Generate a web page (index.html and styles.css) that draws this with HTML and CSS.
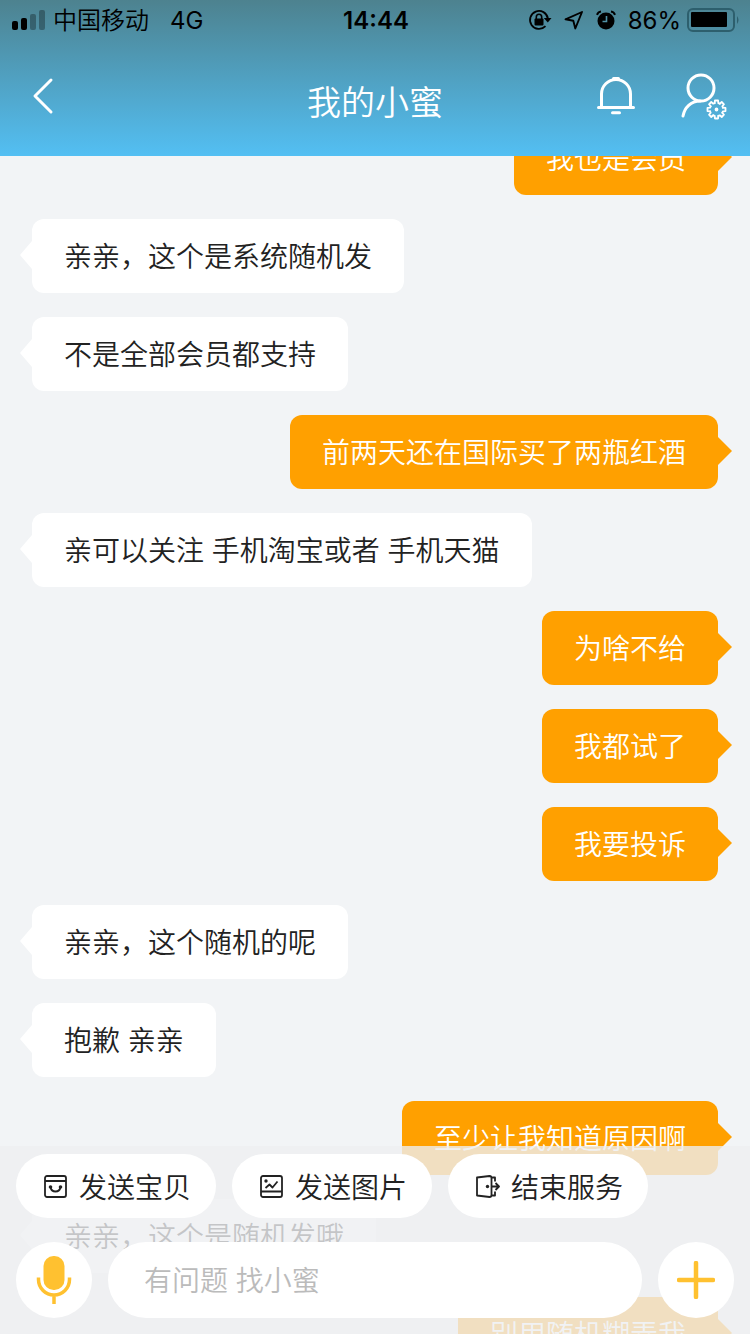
FILE: index.html
```html
<!DOCTYPE html>
<html lang="zh-CN">
<head>
    <meta charset="UTF-8">
    <meta name="viewport" content="width=device-width, initial-scale=1.0">
    <title>我的小蜜</title>
    <link rel="stylesheet" href="styles.css">
</head>
<body>
    <div class="app">
        <header class="header">
            <div class="status-bar">
                <div class="status-left">
                    <svg class="signal" width="33" height="20" viewBox="0 0 33 20">
                        <rect x="0" y="11" width="6" height="9" rx="2"/>
                        <rect x="9" y="8" width="6" height="12" rx="2"/>
                        <rect x="18" y="4" width="6" height="16" rx="2" opacity=".3"/>
                        <rect x="27" y="0" width="6" height="20" rx="2" opacity=".3"/>
                    </svg>
                    <span class="carrier">中国移动</span>
                    <span class="network">4G</span>
                </div>
                <span class="time">14:44</span>
                <div class="status-right">
                    <!-- rotation lock, location, alarm -->
                    <svg width="24" height="22" viewBox="0 0 24 22">
                        <path d="M17.5 17.2A9 9 0 1 1 19.9 9.5" fill="none" stroke="#000" stroke-width="1.8"/>
                        <path d="M15.8 9H23.5L19.8 13.5z"/>
                        <rect x="6.5" y="9.5" width="9" height="7" rx="1"/>
                        <path d="M8.3 10V8a2.7 2.7 0 0 1 5.4 0v2" fill="none" stroke="#000" stroke-width="1.6"/>
                    </svg>
                    <svg width="20" height="20" viewBox="0 0 20 20">
                        <path d="M18 2L1.5 9.3L9.3 10.7L11.3 18.5z" fill="none" stroke="#000" stroke-width="1.9" stroke-linejoin="round"/>
                    </svg>
                    <svg width="20" height="20" viewBox="0 0 20 20">
                        <circle cx="10" cy="11" r="8.5"/>
                        <path d="M1 4.8Q2 2 5 1.5M19 4.8Q18 2 15 1.5" fill="none" stroke="#000" stroke-width="2"/>
                        <path d="M10.5 6v5.5H6.5" fill="none" stroke="#5092a6" stroke-width="1.6"/>
                    </svg>
                    <span class="percent">86%</span>
                    <svg class="battery" width="53" height="24" viewBox="0 0 53 24">
                        <rect x="1" y="1" width="46" height="22" rx="5" fill="none" stroke="#2d5f6d" stroke-width="2"/>
                        <rect x="4" y="4" width="36" height="15" rx="1"/>
                        <path d="M50 8q3 4 0 8z" fill="#2d5f6d"/>
                    </svg>
                </div>
            </div>
            <nav class="nav">
                <button class="icon-button back" aria-label="返回">
                    <svg width="22" height="38" viewBox="0 0 22 38">
                        <path d="M19 3L3 19L19 35"/>
                    </svg>
                </button>
                <h1 class="title">我的小蜜</h1>
                <div class="nav-actions">
                    <button class="icon-button" aria-label="通知">
                        <svg width="38" height="40" viewBox="0 0 38 40">
                            <path d="M4.5 31.5V18a14.5 14.5 0 0 1 29 0v13.5M1.5 31.5h35M15.5 36.7h7M16.5 2.5h5"/>
                        </svg>
                    </button>
                    <button class="icon-button" aria-label="个人设置">
                        <svg width="46" height="48" viewBox="0 0 46 48">
                            <circle cx="20" cy="16" r="13"/>
                            <path d="M2 44C3.5 35.5 10 29 19 29"/>
                            <g class="gear" transform="translate(35.5 37.5)">
                                <path id="tooth" d="M6.4-1.8L9-1.6V1.6L6.4 1.8L5.8 3.25"/>
                                <use href="#tooth" transform="rotate(45)"/>
                                <use href="#tooth" transform="rotate(90)"/>
                                <use href="#tooth" transform="rotate(135)"/>
                                <use href="#tooth" transform="rotate(180)"/>
                                <use href="#tooth" transform="rotate(225)"/>
                                <use href="#tooth" transform="rotate(270)"/>
                                <use href="#tooth" transform="rotate(315)"/>
                                <circle r="1"/>
                            </g>
                        </svg>
                    </button>
                </div>
            </nav>
        </header>

        <main class="chat">
            <div class="messages">
                <p class="bubble sent">我也是会员</p>
                <p class="bubble received">亲亲，这个是系统随机发</p>
                <p class="bubble received">不是全部会员都支持</p>
                <p class="bubble sent">前两天还在国际买了两瓶红酒</p>
                <p class="bubble received">亲可以关注 手机淘宝或者 手机天猫</p>
                <p class="bubble sent">为啥不给</p>
                <p class="bubble sent">我都试了</p>
                <p class="bubble sent">我要投诉</p>
                <p class="bubble received">亲亲，这个随机的呢</p>
                <p class="bubble received">抱歉 亲亲</p>
                <p class="bubble sent">至少让我知道原因啊</p>
                <p class="bubble received">亲亲，这个是随机发哦</p>
                <p class="bubble sent">别用随机糊弄我</p>
            </div>
        </main>

        <footer class="composer">
            <div class="quick-actions">
                <button class="pill">
                    <svg width="24" height="24" viewBox="0 0 24 24">
                        <rect x="1" y="2" width="21" height="21" rx="2"/>
                        <path d="M1 7h21M6.5 13c1 6 9 6 10 0"/>
                        <circle class="dot" cx="6.5" cy="13" r="1.8"/>
                        <circle class="dot" cx="16.5" cy="13" r="1.8"/>
                    </svg>
                    发送宝贝
                </button>
                <button class="pill">
                    <svg width="24" height="24" viewBox="0 0 24 24">
                        <rect x="1" y="2" width="21" height="21" rx="2"/>
                        <path d="M1 17.5h21M5.5 14l4-3.5l3 3l5-6"/>
                        <circle class="dot" cx="6" cy="7" r="1.7"/>
                    </svg>
                    发送图片
                </button>
                <button class="pill">
                    <svg width="24" height="24" viewBox="0 0 24 24">
                        <path d="M1 3.5L13.500 2q2 0 2 2v17q0 2-2 2L1 21.5zM15.5 3.500h3.500v4M15.500 21.500h3.500v-4M15.500 12.500H23M19.500 9l3.500 3.500L19.500 16"/>
                        <circle class="dot" cx="11.5" cy="12.5" r="1.7"/>
                    </svg>
                    结束服务
                </button>
            </div>
            <form class="input-row">
                <button type="button" class="round-button" aria-label="语音输入">
                    <svg width="36" height="50" viewBox="0 0 36 50">
                        <rect x="7.5" y="1" width="21" height="34" rx="10" fill="#ffc130"/>
                        <path d="M2.5 22.5v2a15.5 15.5 0 0 0 31 0v-2M18 40v9" fill="none" stroke="#ffc130" stroke-width="3.5"/>
                    </svg>
                </button>
                <input class="text-input" type="text" placeholder="有问题 找小蜜" aria-label="输入消息">
                <button type="button" class="round-button" aria-label="更多">
                    <svg width="38" height="38" viewBox="0 0 38 38">
                        <path d="M19 2v34M2 19h34" fill="none" stroke="#ffc130" stroke-width="4.5" stroke-linecap="round"/>
                    </svg>
                </button>
            </form>
        </footer>
    </div>
</body>
</html>
```
FILE: styles.css
```css
:root {
    --orange: #ffa000;
    --page: #f2f4f6;
    --text: #222;
}

* {
    margin: 0;
    padding: 0;
    box-sizing: border-box;
}

body,
button,
input {
    font-family: "Liberation Sans", "Noto Sans CJK SC", sans-serif;
    font-weight: 350;
}

body {
    background: var(--page);
    color: var(--text);
}

button {
    border: none;
    background: none;
    cursor: pointer;
}

svg {
    display: block;
    flex-shrink: 0;
}

.app {
    position: relative;
    display: flex;
    flex-direction: column;
    height: 100vh;
    overflow: hidden;
}

/* Header */
.header {
    flex-shrink: 0;
    background: linear-gradient(#4d828f, #53bff3);
}

.status-bar {
    display: grid;
    grid-template-columns: 1fr auto 1fr;
    align-items: center;
    height: 40px;
    padding: 0 10px 0 12px;
    font-family: Inter, "Noto Sans CJK SC", sans-serif;
    font-size: 24px;
    font-weight: 400;
    color: #000;
}

.status-left,
.status-right {
    display: flex;
    align-items: center;
}

.status-left {
    gap: 8px;
}

.carrier {
    padding-top: 2px;
    font-weight: 350;
    line-height: 36px;
}

.network {
    margin-left: 13px;
}

.time {
    font-weight: 600;
}

.status-right {
    justify-content: flex-end;
    gap: 12px;
}

.battery {
    margin-left: -6px;
}

.nav {
    display: grid;
    grid-template-columns: 1fr auto 1fr;
    align-items: center;
    height: 116px;
    padding: 0 23px 4px;
}

.title {
    padding-top: 14px;
    font-size: 34px;
    font-weight: 350;
    line-height: 48px;
    color: #fff;
}

.nav-actions {
    display: flex;
    justify-content: flex-end;
    align-items: center;
    gap: 46px;
}

.icon-button svg {
    fill: none;
    stroke: #fff;
    stroke-width: 3;
    stroke-linecap: round;
    stroke-linejoin: round;
}

.back {
    justify-self: start;
    padding: 0 9px;
}

.icon-button .gear {
    stroke-width: 1.8;
}

/* Messages */
.chat {
    flex: 1;
    min-height: 0;
    overflow: hidden;
}

.messages {
    display: flex;
    flex-direction: column;
    gap: 24px;
    margin-top: -35px;
    padding: 0 32px;
}

.bubble {
    position: relative;
    padding: 18px 32px 14px;
    border-radius: 12px;
    font-size: 28px;
    line-height: 42px;
}

.bubble::after {
    content: "";
    position: absolute;
    top: 50%;
    margin-top: -15px;
    border: 14px solid transparent;
}

.received {
    align-self: flex-start;
    background: #fff;
}

.received::after {
    right: 100%;
    border-left-width: 0;
    border-right-width: 12px;
    border-right-color: #fff;
}

.sent {
    align-self: flex-end;
    background: var(--orange);
    color: #fff;
}

.sent::after {
    left: 100%;
    border-right-width: 0;
    border-left-color: var(--orange);
}

/* Bottom bar, floats over the messages */
.composer {
    position: absolute;
    left: 0;
    right: 0;
    bottom: 0;
    display: flex;
    flex-direction: column;
    gap: 24px;
    padding: 8px 16px 16px;
    background: rgba(237, 239, 241, 0.8);
}

.quick-actions,
.input-row {
    display: flex;
    gap: 16px;
}

.pill {
    display: flex;
    align-items: center;
    gap: 11px;
    height: 64px;
    padding: 0 25px 0 28px;
    border-radius: 32px;
    background: #fff;
    font-size: 28px;
    color: var(--text);
}

.pill svg {
    fill: none;
    stroke: var(--text);
    stroke-width: 1.8;
    stroke-linejoin: round;
}

.pill .dot {
    fill: var(--text);
    stroke: none;
}

.round-button {
    display: flex;
    justify-content: center;
    align-items: center;
    flex-shrink: 0;
    width: 76px;
    height: 76px;
    border-radius: 50%;
    background: #fff;
}

.text-input {
    flex: 1;
    min-width: 0;
    height: 76px;
    padding: 4px 36px 0;
    border: none;
    border-radius: 38px;
    outline: none;
    background: #fff;
    font-size: 28px;
    color: var(--text);
}

.text-input::placeholder {
    color: #bbb;
}
```
